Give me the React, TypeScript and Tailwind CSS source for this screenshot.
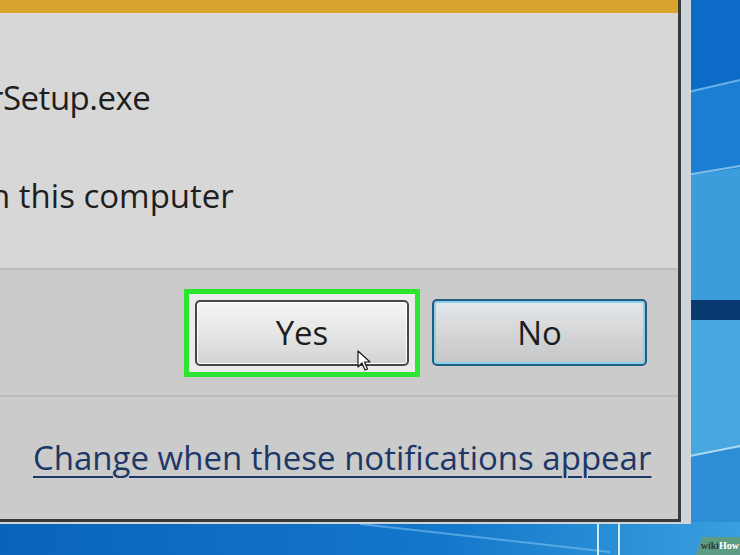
import React from "react";

// Win10 wallpaper behind the prompt, drawn roughly
function Wallpaper() {
  return (
    <svg className="absolute inset-0" width="740" height="555" viewBox="0 0 740 555">
      <defs>
        <linearGradient id="floor" x1="0" y1="0" x2="1" y2="0">
          <stop offset="0" stopColor="#0a63bb" />
          <stop offset="0.6" stopColor="#1477cb" />
          <stop offset="1" stopColor="#3a9fdf" />
        </linearGradient>
      </defs>
      <rect width="740" height="555" fill="#0b6bc7" />
      <polygon points="680,92 740,80 740,168 680,176" fill="#1a7ed3" />
      <polygon points="680,176 740,168 740,300 680,300" fill="#3c9ddc" />
      <rect x="680" y="300" width="60" height="20" fill="#0a3a72" />
      <polygon points="680,320 740,320 740,448 680,458" fill="#47a7de" />
      <polygon points="680,458 740,448 740,530 680,530" fill="#2d8ed6" />
      <line x1="680" y1="94" x2="740" y2="80" stroke="#8cc8f0" strokeWidth="2" opacity="0.7" />
      <line x1="680" y1="176" x2="740" y2="166" stroke="#a8d8f4" strokeWidth="2" opacity="0.7" />
      <line x1="680" y1="458" x2="740" y2="446" stroke="#c6e6f8" strokeWidth="2" opacity="0.8" />
      <rect x="0" y="522" width="740" height="33" fill="url(#floor)" />
      <line x1="360" y1="524" x2="610" y2="552" stroke="#7fc0ec" strokeWidth="2" opacity="0.6" />
      <line x1="598" y1="522" x2="598" y2="555" stroke="#cfe9f8" strokeWidth="2" />
      <line x1="619" y1="522" x2="619" y2="555" stroke="#cfe9f8" strokeWidth="2" />
    </svg>
  );
}

function Cursor() {
  return (
    <svg className="absolute left-[160px] top-[48px]" width="16" height="22" viewBox="0 0 16 22">
      <path d="M1 1 L1 17 L5 13 L8 20 L10.5 19 L7.5 12 L13 12 Z" fill="#ffffff" stroke="#1a1a1a" strokeWidth="1.2" strokeLinejoin="round" />
    </svg>
  );
}

export default function App() {
  return (
    <div className="relative h-[555px] w-[740px] overflow-hidden bg-[#0b6bc7] font-['Open_Sans',sans-serif]">
      <Wallpaper />

      <div className="relative h-[524px] w-[691px] bg-[#cfd4d8] pr-[10px] pb-[2px]">
        <div className="flex h-full w-full flex-col overflow-hidden border-b-[3px] border-r-[3px] border-[#3a3a3a] bg-[#d7d7d7]">
          <div className="h-[13px] shrink-0 bg-[#d8a42d]" />

          <div className="flex h-[255px] shrink-0 flex-col text-[33px] leading-[33px] text-[#1e1e1e]">
            <div className="ml-[-10px] mt-[68px] whitespace-nowrap tracking-[-0.5px]">rSetup.exe</div>
            <div className="ml-[-10px] mt-[65px] whitespace-nowrap">n this computer</div>
          </div>

          <div className="h-[2px] shrink-0 bg-[#bcbcbc]" />

          <div className="flex h-[125px] shrink-0 items-center justify-end gap-[12px] bg-[#cbcbcb] pr-[31px]">
            <div className="border-[5px] border-[#2be52f] bg-[#ebebeb] p-[6px]">
              <div className="relative flex h-[66px] w-[214px] items-center justify-center rounded-[5px] border-2 border-[#464646] bg-linear-to-b from-[#f4f4f4] via-[#e6e6e6] to-[#d3d3d3] text-[33px] text-[#1e1e1e] shadow-[inset_0_0_0_1px_#ffffff]">
                Yes
                <Cursor />
              </div>
            </div>
            <div className="flex h-[67px] w-[215px] items-center justify-center rounded-[5px] border-2 border-[#1f5d83] bg-linear-to-b from-[#e4e8ea] via-[#d4d6d8] to-[#c3c5c7] text-[33px] text-[#1e1e1e] shadow-[inset_0_0_0_2px_#8ccfe6]">
              No
            </div>
          </div>

          <div className="h-[2px] shrink-0 bg-[#bcbcbc]" />

          <div className="flex flex-1 flex-col bg-[#cbcbcb] pl-[33px] pt-[44px]">
            <span className="whitespace-nowrap text-[33px] leading-[33px] text-[#1d3766] underline decoration-2 underline-offset-[6px]">
              Change when these notifications appear
            </span>
          </div>
        </div>
      </div>

      <div className="absolute bottom-0 right-0 flex h-[18px] w-[44px] items-center justify-end bg-[#5d9c84] pl-[6px] pr-[1px] font-['Liberation_Serif',serif] text-[10px] font-bold leading-none [clip-path:polygon(14%_0,100%_0,100%_100%,0_100%)]">
        <span className="text-[#2e3b36]">wiki</span>
        <span className="text-white">How</span>
      </div>
    </div>
  );
}
